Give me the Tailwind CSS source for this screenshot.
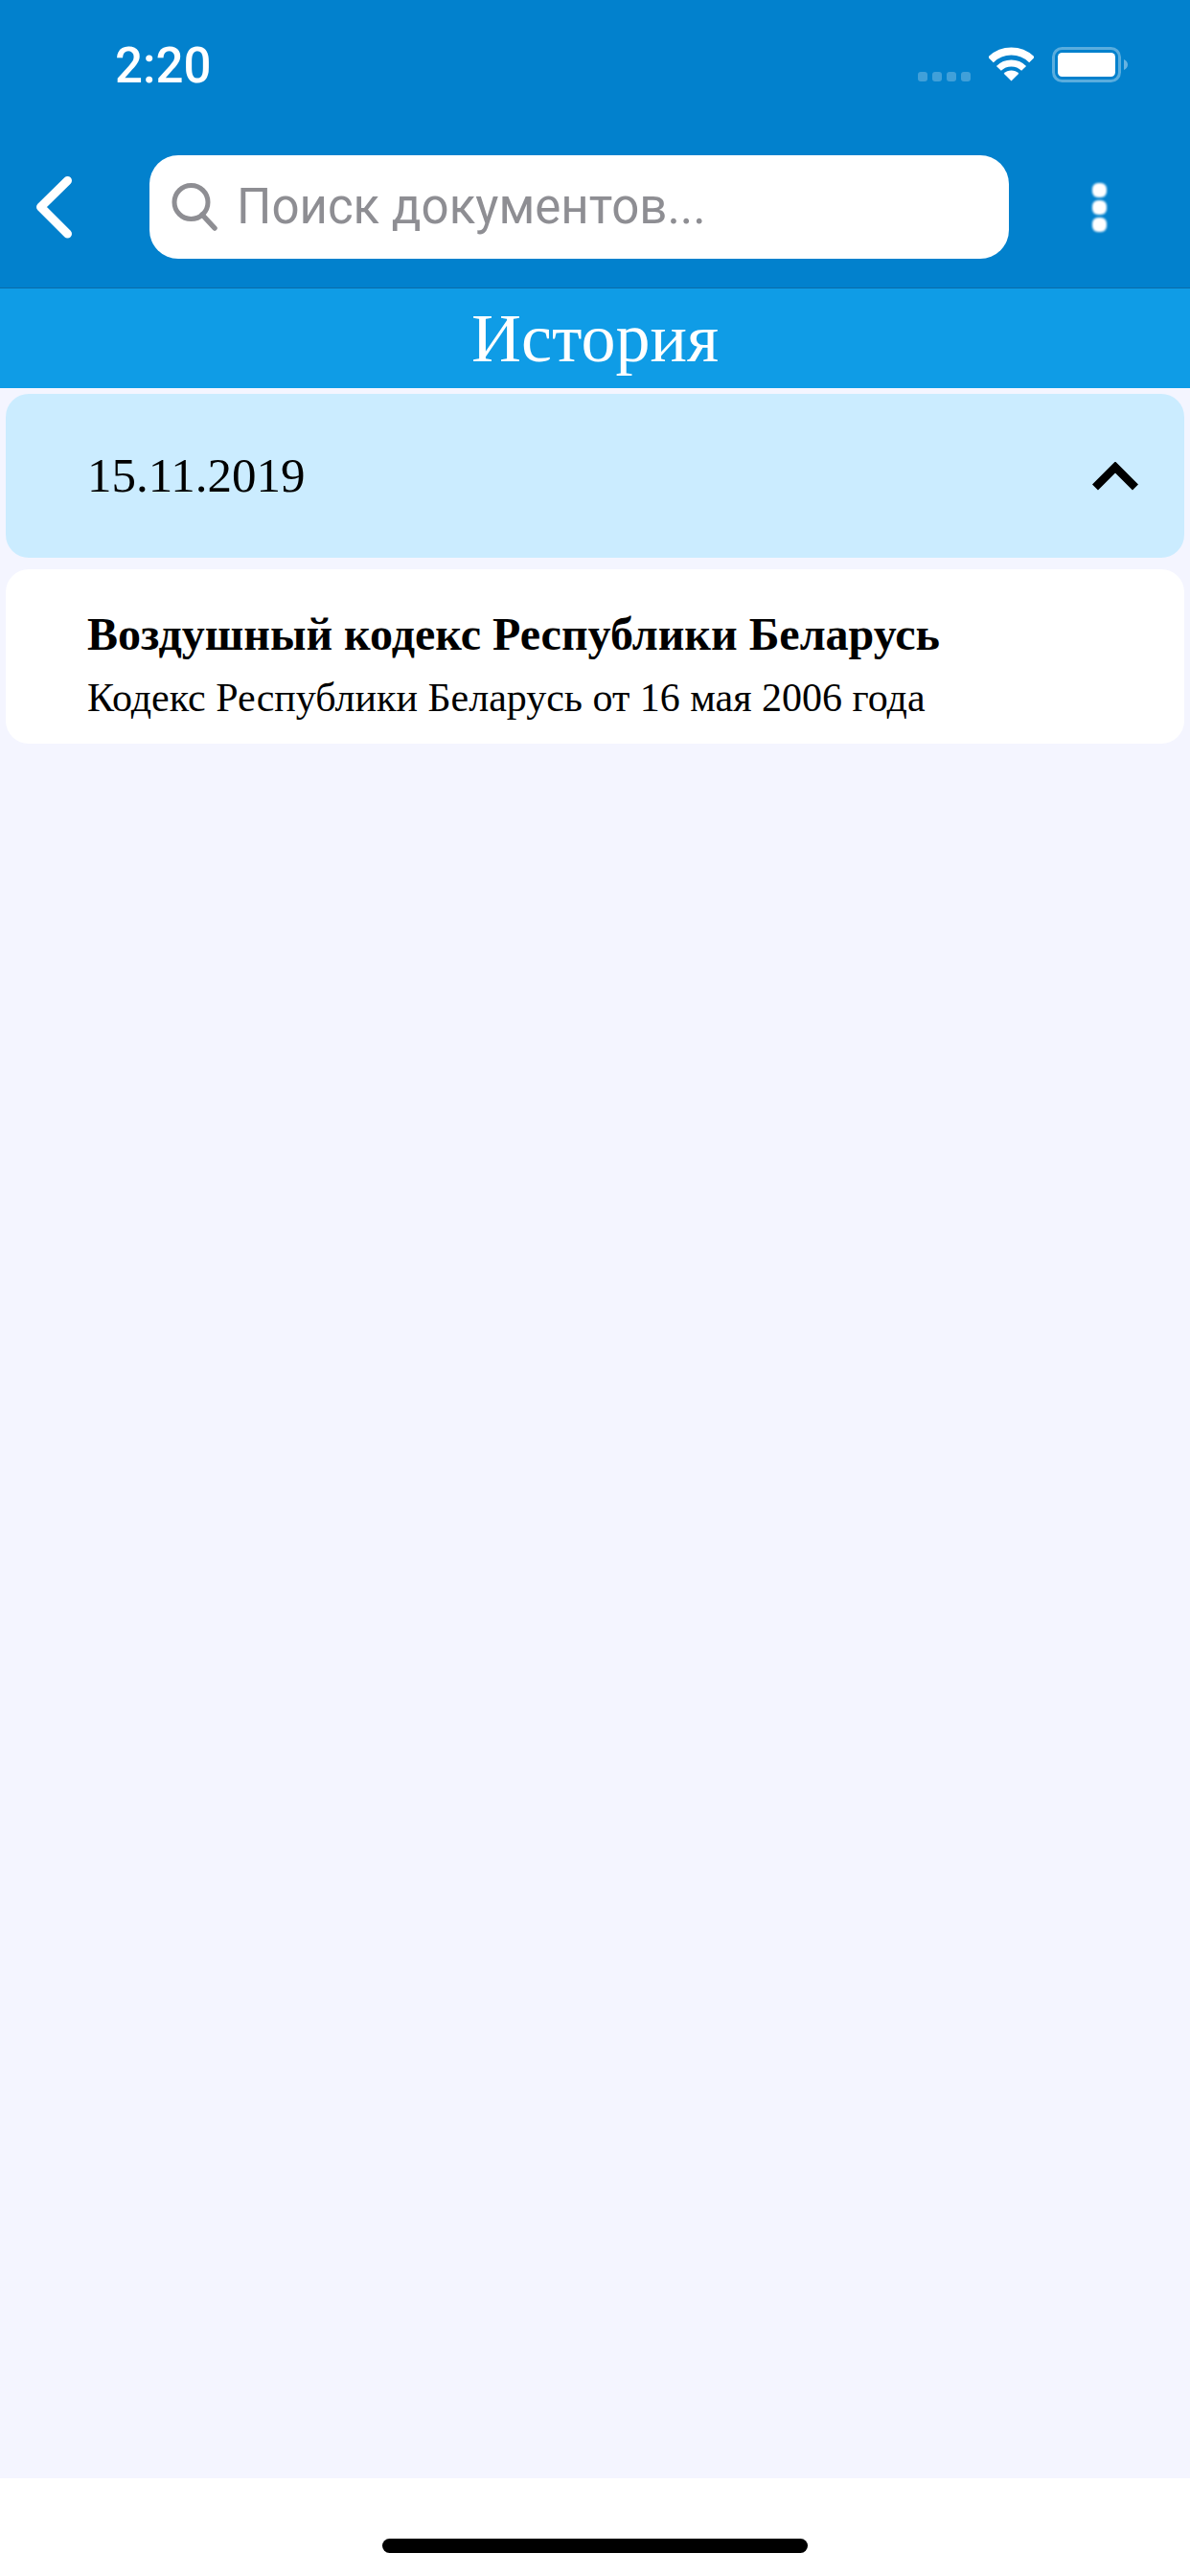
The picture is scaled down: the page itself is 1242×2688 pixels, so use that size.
<!DOCTYPE html>
<html lang="ru">
<head>
    <meta charset="UTF-8">
    <meta name="viewport" content="width=device-width, initial-scale=1.0">
    <title>История</title>
    <script src="https://cdn.jsdelivr.net/npm/@tailwindcss/browser@4"></script>
</head>
<body class="bg-[#f4f5ff] font-['Liberation_Serif',serif] text-black">
    <div class="flex flex-col w-[1242px] h-[2688px] overflow-hidden">

        <!-- Header -->
        <header class="bg-[#0281cd] border-b border-[#0b6ba8] h-[301px] shrink-0">
            <!-- Status bar -->
            <div class="flex items-start h-[132px] pt-[49px]">
                <span class="ml-[120px] mt-[1px] font-['Roboto',sans-serif] font-medium text-[51px] leading-[38px] text-white">2:20</span>
                <div class="ml-auto mr-[65px] flex items-start">
                    <div class="flex gap-[5px] mt-[26px] mr-[19px]">
                        <span class="w-[10px] h-[10px] rounded-[3px] bg-white/25"></span>
                        <span class="w-[10px] h-[10px] rounded-[3px] bg-white/25"></span>
                        <span class="w-[10px] h-[10px] rounded-[3px] bg-white/25"></span>
                        <span class="w-[10px] h-[10px] rounded-[3px] bg-white/25"></span>
                    </div>
                    <svg class="w-[47px] h-[36px] mr-[19px]" viewBox="0 0 47 36" fill="none">
                        <path d="M2 13.4A30.5 30.5 0 0 1 45 13.4" stroke="#fff" stroke-width="8"/>
                        <path d="M10.4 22.4A18.5 18.5 0 0 1 36.6 22.4" stroke="#fff" stroke-width="7"/>
                        <path d="M23.5 35.5L15.7 27.7A11 11 0 0 1 31.3 27.7Z" fill="#fff"/>
                    </svg>
                    <svg class="w-[79px] h-[37px]" viewBox="0 0 79 37" fill="none">
                        <rect x="1.5" y="1.5" width="69" height="34" rx="9" stroke="#fff" stroke-opacity="0.35" stroke-width="3"/>
                        <rect x="6" y="6" width="60" height="25" rx="4.5" fill="#fff"/>
                        <path d="M75 13C77.5 14 79 16 79 18.5C79 21 77.5 23 75 24Z" fill="#fff" fill-opacity="0.4"/>
                    </svg>
                </div>
            </div>

            <!-- Nav bar -->
            <div class="grid grid-cols-[156px_897px_1fr] items-center h-[168px]">
                <svg class="w-[156px] h-[108px]" viewBox="0 0 156 108" fill="none">
                    <path d="M70.5 26.500L42.500 54L70.5 82" stroke="#fff" stroke-width="9" stroke-linecap="round" stroke-linejoin="round"/>
                </svg>
                <div class="flex items-center h-[108px] bg-white rounded-[30px] pl-[23px]">
                    <svg class="w-[48px] h-[50px] shrink-0" viewBox="0 0 48 50" fill="none">
                        <circle cx="20.500" cy="20" r="17.500" stroke="#8e8e93" stroke-width="5"/>
                        <path d="M32 33L45 47" stroke="#8e8e93" stroke-width="5.500" stroke-linecap="round"/>
                    </svg>
                    <span class="ml-[20px] mb-[2px] font-['Roboto',sans-serif] text-[51px] leading-none text-[#8e8e93]">Поиск документов...</span>
                </div>
                <div class="flex flex-col items-center gap-[3px] blur-[0.8px]">
                    <span class="w-[15px] h-[15px] rounded-[6px] bg-white"></span>
                    <span class="w-[15px] h-[15px] rounded-[6px] bg-white"></span>
                    <span class="w-[15px] h-[15px] rounded-[6px] bg-white"></span>
                </div>
            </div>
        </header>

        <!-- Title -->
        <div class="flex items-center justify-center h-[104px] shrink-0 bg-[#0f9ce6]">
            <h1 class="text-[72px] leading-none text-white">История</h1>
        </div>

        <!-- History list -->
        <main class="flex-1 flex flex-col gap-[12px] px-[6px] pt-[6px]">
            <div class="flex items-center justify-between h-[171px] rounded-[24px] bg-[#cbecff] pl-[85px] pr-[48px]">
                <span class="text-[51px] leading-none">15.11.2019</span>
                <svg class="w-[48px] h-[30px]" viewBox="0 0 48 30" fill="none">
                    <path d="M3 26.500L24 5.500L45 26.500" stroke="#000" stroke-width="8.500"/>
                </svg>
            </div>
            <div class="flex flex-col h-[182px] rounded-[24px] bg-white pl-[85px] pt-[40px] gap-[14px]">
                <p class="text-[48px] leading-[56px] font-bold">Воздушный кодекс Республики Беларусь</p>
                <p class="text-[42px] leading-[48px]">Кодекс Республики Беларусь от 16 мая 2006 года</p>
            </div>
        </main>

        <!-- Home indicator -->
        <footer class="flex justify-center h-[102px] shrink-0 bg-white pt-[63px]">
            <span class="w-[444px] h-[15px] rounded-full bg-black"></span>
        </footer>
    </div>
</body>
</html>
